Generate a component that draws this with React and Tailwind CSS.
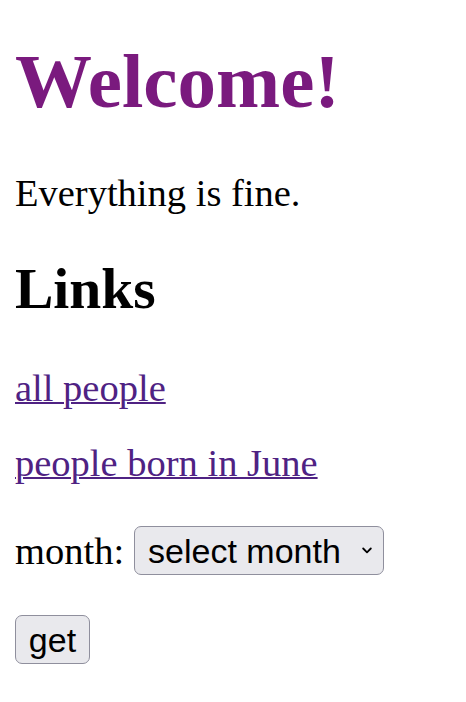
export default function App() {
  return (
    <div className="min-h-screen bg-white px-[15px] pt-[40px] font-['Liberation_Serif',serif] text-black">
      <h1 className="text-[77px] font-bold leading-[82px] text-[#7a1a7e]">Welcome!</h1>

      <p className="mt-[49px] text-[38.5px] leading-[44px]">Everything is fine.</p>

      <h2 className="mt-[42px] text-[57.5px] font-bold leading-[64px]">Links</h2>

      <p className="mt-[45px] text-[38.5px] leading-[44px]">
        <a href="#" className="text-[#4f2283] underline decoration-2">all people</a>
      </p>
      <p className="mt-[31px] text-[38.5px] leading-[44px]">
        <a href="#" className="text-[#4f2283] underline decoration-2">people born in June</a>
      </p>

      {/* month picker */}
      <div className="mt-[41px] flex h-[49px] items-center gap-[10px] text-[38.5px] leading-[44px]">
        <span>month:</span>
        <div className="flex h-[49px] w-[250px] items-center justify-between rounded-[7px] border-[1.5px] border-[#8f8f9d] bg-[#e9e9ed] pl-[13px] pr-[11px] font-['Liberation_Sans',sans-serif] text-[34px] leading-none text-black">
          <span>select month</span>
          <svg width="10" height="7" viewBox="0 0 10 7" fill="none" stroke="black" strokeWidth="1.8" strokeLinecap="round" strokeLinejoin="round">
            <path d="M1.2 1.5 5 5.3 8.8 1.5" />
          </svg>
        </div>
      </div>

      <button className="mt-[40px] flex h-[49px] w-[75px] items-center justify-center rounded-[7px] border-[1.5px] border-[#8f8f9d] bg-[#e9e9ed] font-['Liberation_Sans',sans-serif] text-[34px] leading-none text-black">
        get
      </button>
    </div>
  );
}
